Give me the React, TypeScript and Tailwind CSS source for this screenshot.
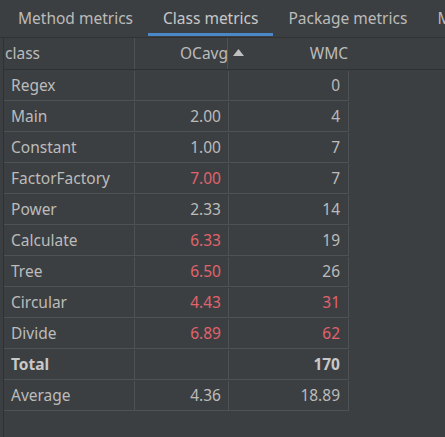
import { ReactNode } from 'react'

const rows: { name: string; avg: string; wmc: string; avgRed?: boolean; wmcRed?: boolean; bold?: boolean }[] = [
  { name: 'Regex', avg: '', wmc: '0' },
  { name: 'Main', avg: '2.00', wmc: '4' },
  { name: 'Constant', avg: '1.00', wmc: '7' },
  { name: 'FactorFactory', avg: '7.00', wmc: '7', avgRed: true },
  { name: 'Power', avg: '2.33', wmc: '14' },
  { name: 'Calculate', avg: '6.33', wmc: '19', avgRed: true },
  { name: 'Tree', avg: '6.50', wmc: '26', avgRed: true },
  { name: 'Circular', avg: '4.43', wmc: '31', avgRed: true, wmcRed: true },
  { name: 'Divide', avg: '6.89', wmc: '62', avgRed: true, wmcRed: true },
  { name: 'Total', avg: '', wmc: '170', bold: true },
  { name: 'Average', avg: '4.36', wmc: '18.89' },
]

function Tab({ children, active }: { children: ReactNode; active?: boolean }) {
  return (
    <div className="relative h-full px-[15px] flex items-center shrink-0 whitespace-nowrap">
      <span className={active ? 'text-[#c8c8c8]' : 'text-[#bbbbbb]'}>{children}</span>
      {active && <div className="absolute left-0 right-0 bottom-[1px] h-[3px] bg-[#4a88c7]" />}
    </div>
  )
}

export default function App() {
  return (
    <div
      className="w-[445px] h-[437px] bg-[#3c3f41] text-[#bbbbbb] text-[15.5px] overflow-hidden"
      style={{ fontFamily: '"Noto Sans", "Open Sans", sans-serif' }}
    >
      <div className="h-[38px] pl-[3px] flex items-center border-b border-[#323232] overflow-hidden">
        <Tab>Method metrics</Tab>
        <Tab active>Class metrics</Tab>
        <Tab>Package metrics</Tab>
        <Tab>Modules metrics</Tab>
      </div>

      <div className="ml-[3px] border-l border-[#2f3133] h-full">
        {/* header */}
        <div className="h-[32px] flex items-center border-b border-[#2f3133] bg-[#3c3f41]">
          <div className="w-[131px] h-full flex items-center pl-[1px] border-r border-[#4f5254]">class</div>
          <div className="w-[93px] h-full relative flex items-center justify-end border-r border-[#4f5254]">
            <span className="mr-[-1px]">OCavg</span>
            <svg className="absolute left-[98px] top-[11px]" width="11" height="7" viewBox="0 0 11 7">
              <path d="M5.5 0 L11 7 L0 7 Z" fill="#c0c0c0" />
            </svg>
          </div>
          <div className="w-[120px] h-full flex items-center justify-end">WMC</div>
        </div>

        {/* body */}
        <div className="w-[345px]">
          {rows.map(r => (
            <div
              key={r.name}
              className={`h-[31px] pt-[1px] flex items-center border-b border-[#4f5254] ${r.bold ? 'font-bold text-[#c8c8c8]' : ''}`}
            >
              <div className="w-[131px] h-full flex items-center pl-[7px] border-r border-[#4f5254]">{r.name}</div>
              <div
                className={`w-[94px] h-full flex items-center justify-end pr-[7px] border-r border-[#4f5254] ${r.avgRed ? 'text-[#e0636d]' : ''}`}
              >
                {r.avg}
              </div>
              <div
                className={`w-[120px] h-full flex items-center justify-end pr-[8px] border-r border-[#4f5254] ${r.wmcRed ? 'text-[#e0636d]' : ''}`}
              >
                {r.wmc}
              </div>
            </div>
          ))}
        </div>
      </div>
    </div>
  )
}
